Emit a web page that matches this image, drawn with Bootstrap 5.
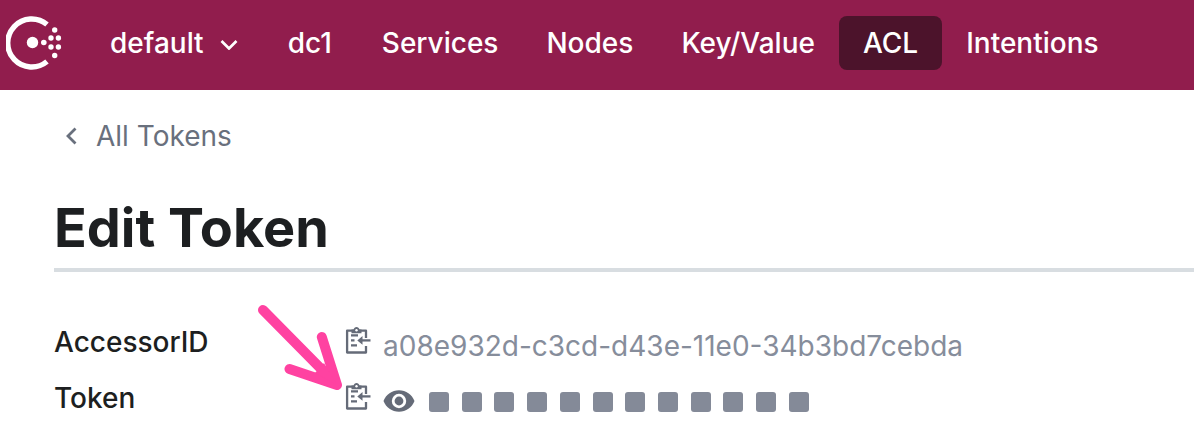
<!DOCTYPE html>
<html lang="en">
<head>
<meta charset="utf-8">
<meta name="viewport" content="width=device-width, initial-scale=1">
<title>Edit Token</title>
<link href="https://cdn.jsdelivr.net/npm/bootstrap@5.3.0/dist/css/bootstrap.min.css" rel="stylesheet">
<style>
  body { font-family: Inter, "Liberation Sans", sans-serif; font-size: 28px; line-height: 40px; color: #1d1f21; background: #fff; overflow-x: hidden; }
  svg { display: block; flex: none; }
  .topbar { background: #911d4d; padding: 16px 0 20px 6px; }
  .topbar .nav-link, .topbar .dc-toggle { color: #fff; font-size: 28px; font-weight: 500; line-height: 53px; padding: 1px 24px 0; border: 0; border-radius: 8px; background: none; white-space: nowrap; }
  .topbar .nav-link.active { background: #4c132b; }
  .topbar .scope { margin-right: 2px; }
  .brand { width: 58px; margin-right: 22px; }
  .page { padding: 26px 0 20px 54px; }
  .crumb { color: #69707d; gap: 16px; padding-left: 8px; }
  .page-title { font-size: 54px; line-height: 72px; font-weight: 700; margin: 36px 0 50px; padding-bottom: 4px; border-bottom: 4px solid #d8dde1; }
  .detail { height: 40px; margin-bottom: 16px; }
  .detail dt { width: 291px; font-weight: 500; }
  .detail dd { gap: 12px; }
  .icon-btn { border: 0; background: none; padding: 0; color: #656b78; }
  .token-value { color: #868d9b; padding-top: 4px; }
  .masked { width: 382px; margin-top: 14px; padding-left: 2px; }
  .masked span { width: 20px; height: 20px; border-radius: 3px; background: #848a98; }
  .eye { margin-top: 12px; }
  .pointer { left: 256px; top: 303px; pointer-events: none; }
</style>
</head>
<body class="position-relative">
<header class="topbar d-flex align-items-center">
  <a href="#" class="brand" aria-label="Home">
    <svg width="58" height="54" viewBox="0 0 58 54" fill="#fff">
      <path d="M41 8.500A24 24 0 1 0 41 45.500" fill="none" stroke="#fff" stroke-width="5.400"/>
      <circle cx="26.500" cy="26.500" r="5.700"/><circle cx="37.800" cy="26.500" r="2.800"/>
      <circle cx="45" cy="22" r="2.700"/><circle cx="45" cy="31" r="2.700"/>
      <circle cx="52.400" cy="22" r="2.700"/><circle cx="52.400" cy="31" r="2.700"/>
      <circle cx="48.700" cy="14" r="2.700"/><circle cx="48.700" cy="39.500" r="2.700"/>
    </svg>
  </a>
  <nav class="nav flex-nowrap" aria-label="Main">
    <button type="button" class="dc-toggle scope d-flex align-items-center" aria-haspopup="true">default
      <svg class="ms-3" width="18" height="12" viewBox="0 0 18 12" fill="none" stroke="#fff" stroke-width="2.700"><path d="M1.500 3l7.500 7.500L16.500 3"/></svg>
    </button>
    <a class="nav-link scope" href="#">dc1</a>
    <a class="nav-link" href="#">Services</a>
    <a class="nav-link" href="#">Nodes</a>
    <a class="nav-link" href="#">Key/Value</a>
    <a class="nav-link active" aria-current="page" href="#">ACL</a>
    <a class="nav-link" href="#">Intentions</a>
  </nav>
</header>
<main class="page">
  <a href="#" class="crumb d-flex align-items-center text-decoration-none">
    <svg width="18" height="18" viewBox="0 0 18 18" fill="none" stroke="currentColor" stroke-width="2.800"><path d="M13.500 1.500L6 9l7.500 7.500"/></svg>
    All Tokens
  </a>
  <h1 class="page-title">Edit Token</h1>
  <dl class="mb-0">
    <div class="detail d-flex">
      <dt>AccessorID</dt>
      <dd class="d-flex align-items-start mb-0">
        <button type="button" class="icon-btn" aria-label="Copy AccessorID"><svg width="26" height="36" viewBox="0 0 26 36"><use href="#copy"/></svg></button>
        <span class="token-value">a08e932d-c3cd-d43e-11e0-34b3bd7cebda</span>
      </dd>
    </div>
    <div class="detail d-flex">
      <dt>Token</dt>
      <dd class="d-flex align-items-start mb-0">
        <button type="button" class="icon-btn" aria-label="Copy token"><svg width="26" height="36" viewBox="0 0 26 36"><use href="#copy"/></svg></button>
        <button type="button" class="icon-btn eye" aria-label="Show token">
          <svg width="32" height="22" viewBox="0 0 32 22" fill="currentColor"><path fill-rule="evenodd" d="M0.500 11C3 4.500 9 .300 16 .300S29 4.500 31.500 11C29 17.500 23 21.700 16 21.700S3 17.500.500 11zM16 3.800a7.200 7.200 0 1 0 0 14.400a7.200 7.200 0 1 0 0-14.400z"/><circle cx="16" cy="11" r="4.400"/></svg>
        </button>
        <span class="masked d-flex justify-content-between" role="img" aria-label="Hidden token"><span></span><span></span><span></span><span></span><span></span><span></span><span></span><span></span><span></span><span></span><span></span><span></span></span>
      </dd>
    </div>
  </dl>
</main>
<svg class="d-none" aria-hidden="true">
  <symbol id="copy" viewBox="0 0 26 36">
    <g fill="none" stroke="currentColor" stroke-width="2.300">
      <path d="M21 16V8.700H2.100V30.500H21V24" stroke-linejoin="round"/>
      <path d="M6 13.400h7M6 18.400h3.500M6 23.300h6"/>
      <path d="M16 18.400h9.500"/>
    </g>
    <path fill="currentColor" d="M12.300 18.400l5.200-4.300v8.600zM6.500 7.600h2C9 5.800 10 4.900 11.500 4.900s2.500.900 3 2.700h2v3.600h-10z"/>
    <circle cx="11.500" cy="8.200" r="1.200" fill="#fff"/>
  </symbol>
</svg>
<svg class="pointer position-absolute" width="92" height="92" viewBox="256 303 92 92" fill="none" stroke="#ff42a1" stroke-width="10" stroke-linecap="round" stroke-linejoin="round" aria-hidden="true"><path d="M263 310l74 75M289.500 369l47.500 16l-15.200-48"/><path d="M324 363l13 22l-22-12z" fill="#ff42a1" stroke="none"/></svg>
<script src="https://cdn.jsdelivr.net/npm/bootstrap@5.3.0/dist/js/bootstrap.bundle.min.js"></script>
</body>
</html>
